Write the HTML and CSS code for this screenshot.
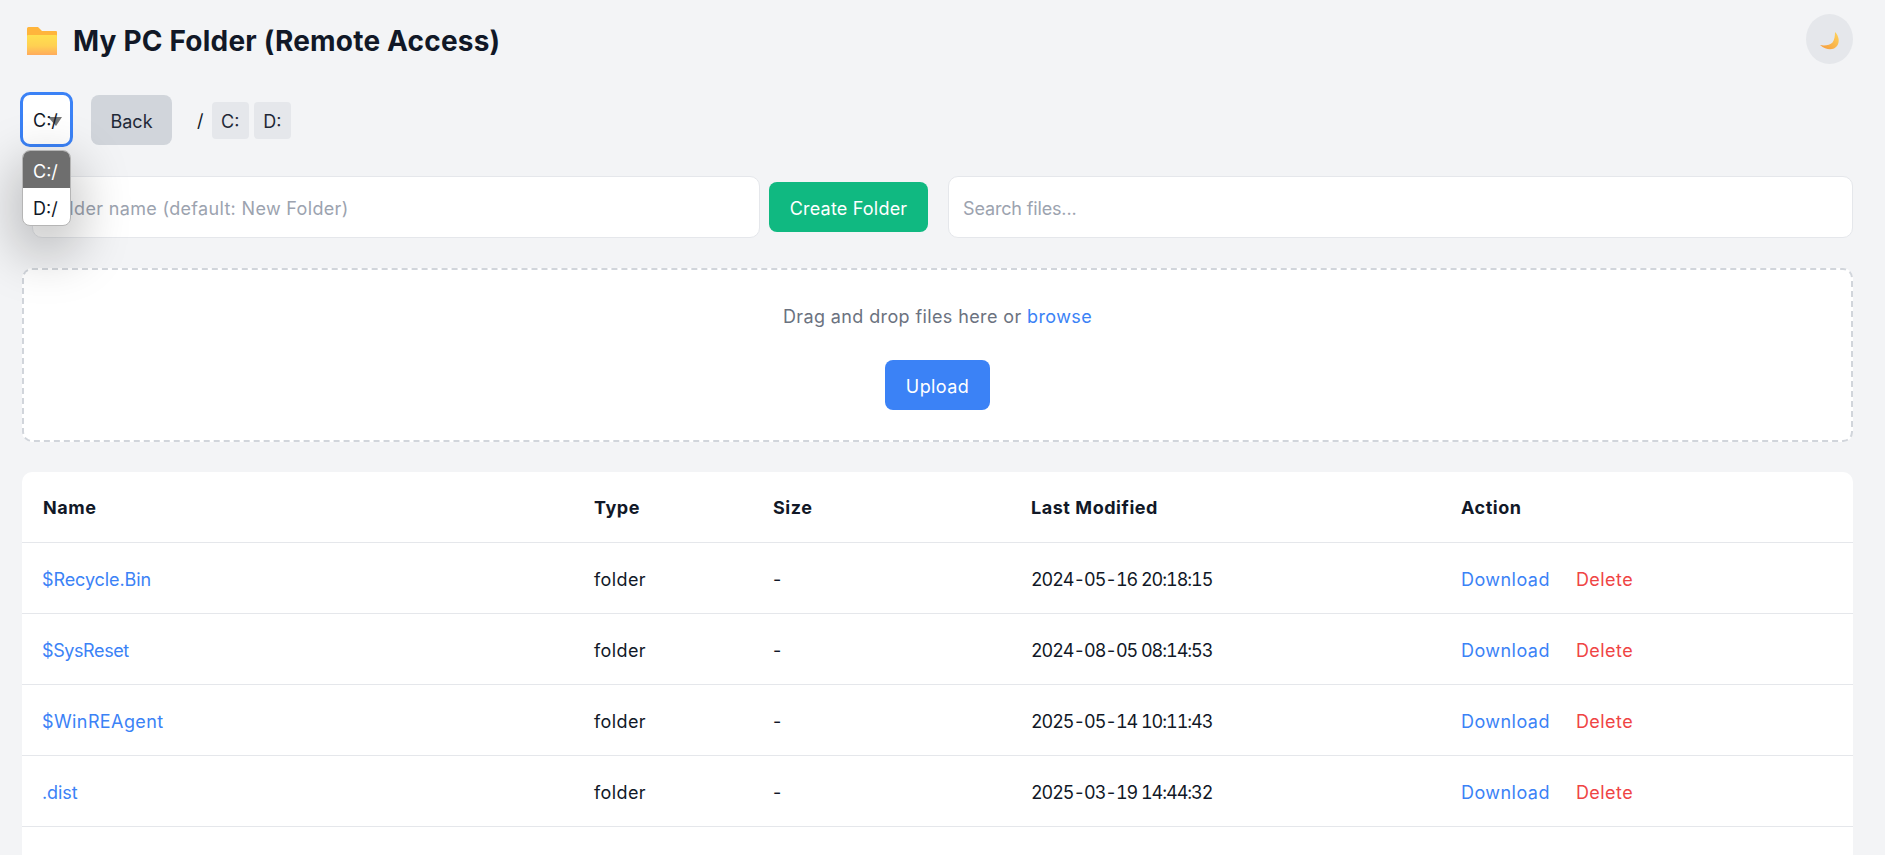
FILE: index.html
```html
<!DOCTYPE html>
<html lang="en">
<head>
    <meta charset="UTF-8">
    <meta name="viewport" content="width=device-width, initial-scale=1.0">
    <title>My PC Folder (Remote Access)</title>
    <link rel="stylesheet" href="styles.css">
</head>
<body>

    <header class="top-bar">
        <h1 class="page-title">
            <svg class="folder-icon" viewBox="0 0 30 28" aria-hidden="true">
                <defs>
                    <linearGradient id="folderFront" x1="0" y1="0" x2="0" y2="1">
                        <stop offset="0" stop-color="#ffe04f"/>
                        <stop offset="0.55" stop-color="#ffd052"/>
                        <stop offset="1" stop-color="#ffab5c"/>
                    </linearGradient>
                </defs>
                <path d="M0 1.500Q0 0 1.500 0H11L15 4H29Q30 4 30 5V10H0Z" fill="#ffb53c"/>
                <path d="M0 9Q0 8 1 8H29Q30 8 30 9V28H0Z" fill="url(#folderFront)"/>
            </svg>
            My PC Folder (Remote Access)
        </h1>
        <button class="theme-btn" type="button" aria-label="Toggle theme">
            <svg class="moon-icon" viewBox="0 0 20 20" aria-hidden="true">
                <defs>
                    <linearGradient id="moonFill" x1="1" y1="0" x2="0" y2="1">
                        <stop offset="0" stop-color="#ffd45c"/>
                        <stop offset="1" stop-color="#f59a3c"/>
                    </linearGradient>
                </defs>
                <path d="M15 1C19 5 20 11 17 15C14 19 7 20 0 14C5 15 10 14 12.500 11.500C14.500 9 15 5 15 1Z" fill="url(#moonFill)"/>
            </svg>
        </button>
    </header>

    <nav class="drive-bar">
        <div class="drive-select">
            <svg class="select-arrow" viewBox="0 0 14 10" aria-hidden="true"><path d="M0 1H14L8 10Z" fill="#777"/></svg>
            <span class="drive-value">C:/</span>
            <ul class="drive-menu">
                <li class="drive-option selected">C:/</li>
                <li class="drive-option">D:/</li>
            </ul>
        </div>
        <button class="btn btn-back" type="button">Back</button>
        <div class="breadcrumb">
            <span class="crumb-sep">/</span>
            <a class="crumb" href="#">C:</a>
            <a class="crumb" href="#">D:</a>
        </div>
    </nav>

    <section class="tools-row">
        <input class="text-input folder-input" type="text" placeholder="Folder name (default: New Folder)">
        <button class="btn btn-create" type="button">Create Folder</button>
        <input class="text-input search-input" type="text" placeholder="Search files...">
    </section>

    <section class="drop-zone">
        <p class="drop-text">Drag and drop files here or <a href="#">browse</a></p>
        <button class="btn btn-upload" type="button">Upload</button>
    </section>

    <section class="table-card">
        <table class="file-table">
            <colgroup>
                <col class="col-name">
                <col class="col-type">
                <col class="col-size">
                <col class="col-date">
                <col class="col-action">
            </colgroup>
            <thead>
                <tr>
                    <th>Name</th>
                    <th>Type</th>
                    <th>Size</th>
                    <th>Last Modified</th>
                    <th>Action</th>
                </tr>
            </thead>
            <tbody>
                <tr>
                    <td><a class="file-link" href="#">$Recycle.Bin</a></td>
                    <td class="cell-type">folder</td>
                    <td>-</td>
                    <td class="cell-date">2024-05-16 20:18:15</td>
                    <td class="cell-action"><a href="#">Download</a><a class="link-delete" href="#">Delete</a></td>
                </tr>
                <tr>
                    <td><a class="file-link tight" href="#">$SysReset</a></td>
                    <td class="cell-type">folder</td>
                    <td>-</td>
                    <td class="cell-date">2024-08-05 08:14:53</td>
                    <td class="cell-action"><a href="#">Download</a><a class="link-delete" href="#">Delete</a></td>
                </tr>
                <tr>
                    <td><a class="file-link wide" href="#">$WinREAgent</a></td>
                    <td class="cell-type">folder</td>
                    <td>-</td>
                    <td class="cell-date">2025-05-14 10:11:43</td>
                    <td class="cell-action"><a href="#">Download</a><a class="link-delete" href="#">Delete</a></td>
                </tr>
                <tr>
                    <td><a class="file-link" href="#">.dist</a></td>
                    <td class="cell-type">folder</td>
                    <td>-</td>
                    <td class="cell-date">2025-03-19 14:44:32</td>
                    <td class="cell-action"><a href="#">Download</a><a class="link-delete" href="#">Delete</a></td>
                </tr>
            </tbody>
        </table>
    </section>

</body>
</html>
```

FILE: styles.css
```css
* {
    box-sizing: border-box;
}

body {
    display: flex;
    flex-direction: column;
    height: 100vh;
    margin: 0;
    padding: 14px 32px 0 22px;
    overflow: hidden;
    background-color: #f3f4f6;
    color: #111827;
    font-family: Inter, "Noto Sans", sans-serif;
    font-size: 18px;
}

a {
    color: #3b82f6;
    text-decoration: none;
}

button,
input {
    font: inherit;
}

.top-bar {
    display: flex;
    flex: none;
    align-items: center;
    justify-content: space-between;
    height: 50px;
    margin-bottom: 28px;
}

.page-title {
    display: flex;
    align-items: center;
    gap: 17px;
    margin: 3px 0 0 5px;
    font-size: 28px;
    font-weight: 700;
    letter-spacing: 0.2px;
}

.folder-icon {
    width: 30px;
    height: 28px;
    margin-right: -1px;
}

.theme-btn {
    display: flex;
    align-items: center;
    justify-content: center;
    width: 47px;
    height: 50px;
    padding: 4px 0 0;
    border: none;
    border-radius: 50%;
    background-color: #e5e7eb;
}

.moon-icon {
    width: 20px;
    height: 20px;
}

.drive-bar {
    display: flex;
    flex: none;
    align-items: center;
    height: 55px;
    margin-bottom: 29px;
}

.drive-select {
    position: relative;
    display: flex;
    align-items: center;
    width: 53px;
    height: 55px;
    margin: 0 18px 0 -2px;
    padding: 2px 0 0 10px;
    border: 3px solid #3b82f6;
    border-radius: 10px;
    background-color: #fff;
}

.drive-value {
    position: relative;
}

.select-arrow {
    position: absolute;
    left: 25px;
    top: 21px;
    width: 14px;
    height: 10px;
}

.drive-menu {
    position: absolute;
    left: -1px;
    top: 55px;
    z-index: 5;
    width: 49px;
    margin: 0;
    padding: 0;
    overflow: hidden;
    list-style: none;
    border: 1px solid #b5b5b5;
    border-radius: 8px;
    background-color: #fff;
    box-shadow: 0 20px 50px 10px rgba(0, 0, 0, 0.22);
}

.drive-option {
    height: 37px;
    padding: 2px 0 0 10px;
    line-height: 37px;
}

.drive-option.selected {
    background-color: #6e6e6e;
    color: #fff;
}

.btn {
    height: 50px;
    padding: 2px 0 0;
    border: none;
    border-radius: 8px;
    color: #fff;
    cursor: pointer;
}

.btn-back {
    width: 81px;
    margin-top: 1px;
    background-color: #d1d5db;
    color: #1f2937;
}

.btn-create {
    flex: none;
    width: 159px;
    margin: 0 20px 0 9px;
    background-color: #10b981;
    letter-spacing: 0.2px;
}

.btn-upload {
    width: 105px;
    background-color: #3b82f6;
    letter-spacing: 0.4px;
}

.breadcrumb {
    display: flex;
    align-items: center;
    gap: 5px;
    margin: 1px 0 0 25px;
}

.crumb-sep {
    margin-right: 3px;
}

.crumb {
    display: block;
    padding: 9px 9.500px 7px;
    border-radius: 4px;
    background-color: #e5e7eb;
    color: #1f2937;
}

.tools-row {
    display: flex;
    flex: none;
    align-items: center;
    height: 62px;
    margin-bottom: 30px;
}

.text-input {
    height: 62px;
    padding: 2px 14px 0;
    border: 1px solid #e5e7eb;
    border-radius: 10px;
    background-color: #fff;
}

.text-input::placeholder {
    color: #9ca3af;
}

.folder-input {
    width: 728px;
    margin-left: 10px;
    padding-left: 15px;
    letter-spacing: 0.33px;
}

.search-input {
    flex: 1;
    letter-spacing: -0.15px;
}

.drop-zone {
    display: flex;
    flex: none;
    flex-direction: column;
    align-items: center;
    height: 174px;
    margin-bottom: 30px;
    padding-top: 36px;
    border: 2px dashed #d1d5db;
    border-radius: 10px;
    background-color: #fff;
}

.drop-text {
    margin: 0 0 32px;
    color: #6b7280;
    line-height: 22px;
    letter-spacing: 0.38px;
}

.table-card {
    flex: 1;
    border-radius: 10px 10px 0 0;
    background-color: #fff;
    overflow: hidden;
}

.file-table {
    width: 100%;
    table-layout: fixed;
    border-collapse: collapse;
}

.col-name { width: 551px; }
.col-type { width: 179px; }
.col-size { width: 258px; }
.col-date { width: 430px; }

.file-table th,
.file-table td {
    border-bottom: 1px solid #e5e7eb;
    text-align: left;
}

.file-table th {
    height: 70px;
    padding: 2px 21px 0;
    font-weight: 700;
    letter-spacing: 0.55px;
}

.file-table td {
    height: 71px;
    padding: 4px 21px 0;
}

.file-link {
    margin-left: -1px;
    letter-spacing: -0.1px;
}

.file-link.tight {
    letter-spacing: -0.4px;
}

.file-link.wide {
    letter-spacing: 0.4px;
}

.cell-type {
    letter-spacing: 0.4px;
}

.cell-date {
    font-variant-numeric: tabular-nums;
    letter-spacing: -1.05px;
}

.cell-action {
    letter-spacing: 0.45px;
}

.link-delete {
    margin-left: 26px;
    color: #ef4444;
}
```
